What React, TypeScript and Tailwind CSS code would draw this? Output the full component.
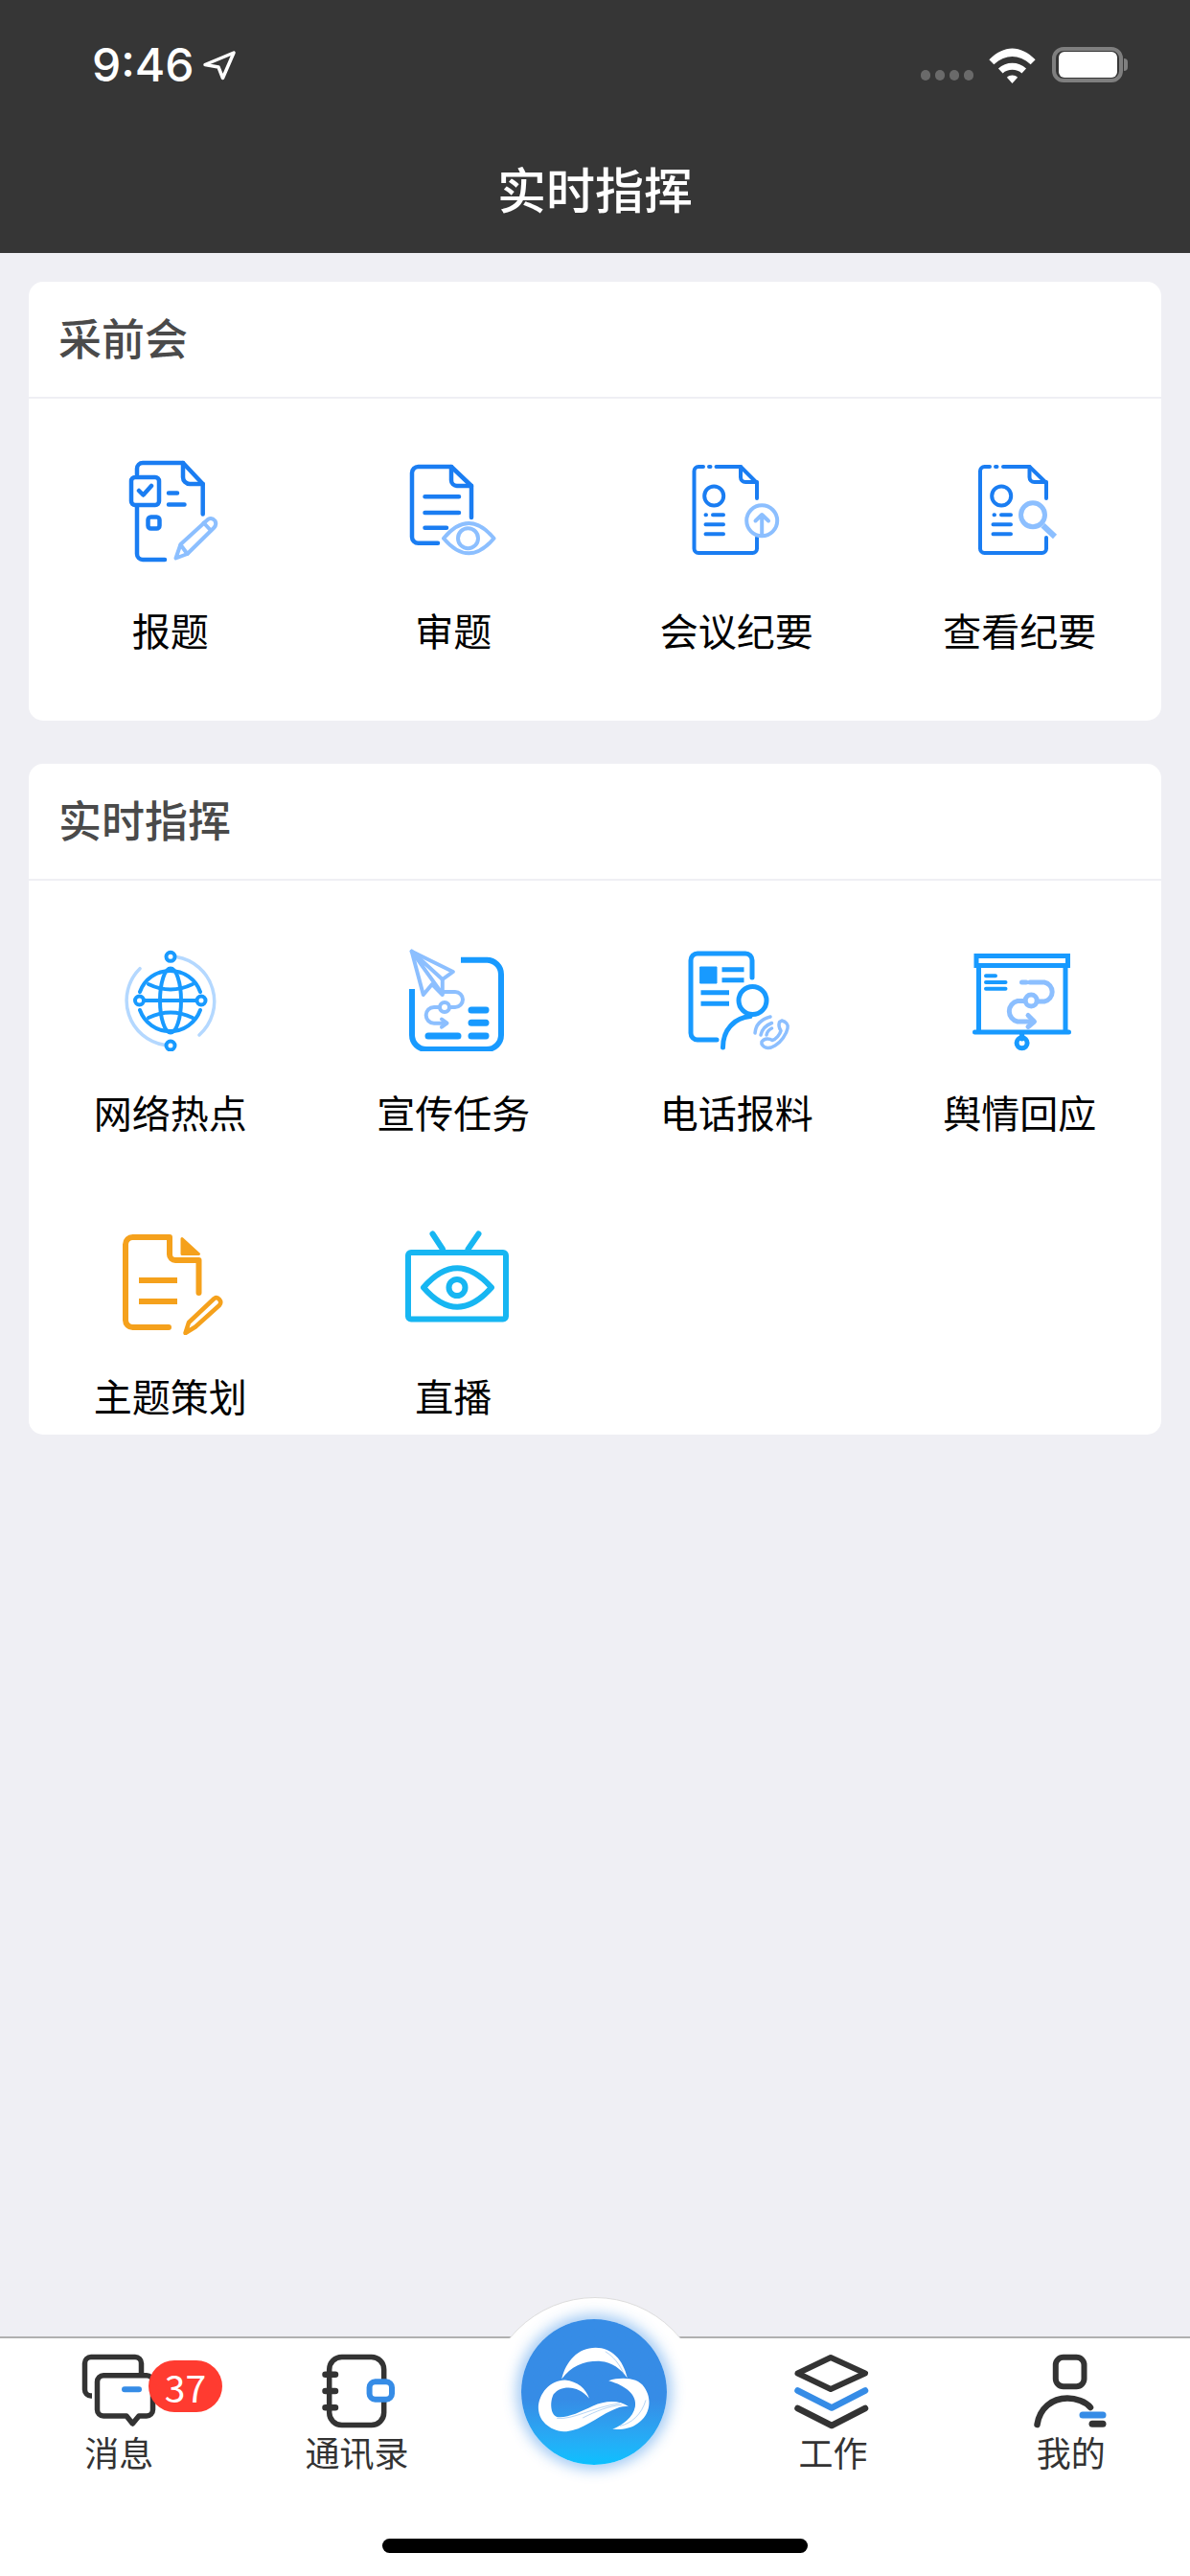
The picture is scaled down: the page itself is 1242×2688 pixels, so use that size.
import type { ReactNode } from "react";

const BLUE = "#1a7df2";
const SKY = "#189aff";
const LIGHT = "#8cbfff";
const DARK = "#333333";
const ACCENT = "#368ce6";

function Glyph({ children }: { children: ReactNode }) {
  return (
    <svg viewBox="0 0 120 120" className="h-[120px] w-[120px]" fill="none" strokeLinecap="round" strokeLinejoin="round">
      {children}
    </svg>
  );
}

function TabGlyph({ children }: { children: ReactNode }) {
  return (
    <svg viewBox="0 0 100 80" className="h-[80px] w-[100px]" fill="none" strokeLinecap="round" strokeLinejoin="round">
      {children}
    </svg>
  );
}

const reportIcon = (
  <Glyph>
    <g stroke={BLUE} strokeWidth="4.500">
      <path d="M25 21V15a6 6 0 0 1 6-6H73L93.700 31V62.500M25 55V104a6 6 0 0 0 6 6H54" />
      <path d="M73 9V24a7 7 0 0 0 7 7H93.700" />
      <rect x="19" y="24" width="29" height="29" rx="4" />
      <path d="M27 38l4.500 4.500L40 33" />
      <path d="M58 40.500H67M58 52.500H74.500" />
      <rect x="36.500" y="65.500" width="12" height="12" rx="3" />
    </g>
    <g stroke={LIGHT} strokeWidth="4">
      <path d="M65.500 108.500L70.500 94L99 68Q103 65.500 106.500 69.500Q108.500 73.500 105.500 76.500L77.500 104Z" />
      <path d="M94.500 71.500L102 79.500M70.500 94.500L77.500 104" />
    </g>
  </Glyph>
);

const reviewIcon = (
  <Glyph>
    <g stroke={BLUE} strokeWidth="4.500">
      <path d="M44 92.700H23.500a6.500 6.500 0 0 1-6.500-6.500V19.500a6.500 6.500 0 0 1 6.500-6.500H58L79 33V66" />
      <path d="M58 13V27a6 6 0 0 0 6 6H79" />
      <path d="M30.500 44.300H66M30.500 61H66M30.500 76.700H53" />
    </g>
    <g stroke={LIGHT} strokeWidth="4">
      <path d="M50 87.700Q76.400 56.500 102.500 87.700Q76.400 119 50 87.700Z" />
      <circle cx="75.500" cy="87.700" r="10.500" />
    </g>
  </Glyph>
);

const minutesIcon = (
  <Glyph>
    <g stroke={BLUE} strokeWidth="4">
      <path d="M25 13H20a4.500 4.500 0 0 0-4.500 4.500V98.500a4.500 4.500 0 0 0 4.500 4.500H76.500a4.500 4.500 0 0 0 4.500-4.500V87" />
      <path d="M31 13H32.500M38.500 13H64L81 30V46" />
      <path d="M64 13V24a5 5 0 0 0 5 5H81" />
      <circle cx="36.200" cy="43.500" r="10" />
      <path d="M27.500 63.300H28M35 63.300H46M27.500 73.300H46M27.500 83.300H46" />
    </g>
    <g stroke={LIGHT} strokeWidth="4">
      <circle cx="86.200" cy="69.300" r="16" />
      <path d="M86.200 85V63.500M79.500 69.500L86.200 63L93 69.500" />
    </g>
  </Glyph>
);

const viewMinutesIcon = (
  <Glyph>
    <g stroke={BLUE} strokeWidth="4">
      <path d="M29 13H23.500a4.500 4.500 0 0 0-4.500 4.500V98.500a4.500 4.500 0 0 0 4.500 4.500H83.500a4.500 4.500 0 0 0 4.500-4.500V87" />
      <path d="M35 13H36.500M43 13H70.500L88 30V46" />
      <path d="M70.500 13V24a5 5 0 0 0 5 5H88" />
      <circle cx="41.200" cy="43.500" r="10" />
      <path d="M33.500 63.300H34M41 63.300H51M32.500 73.300H51M32.500 83.300H51" />
    </g>
    <g stroke={LIGHT}>
      <circle cx="74" cy="63.300" r="12.500" strokeWidth="5" />
      <path d="M84.500 74.300L97 86" strokeWidth="6" strokeLinecap="butt" />
    </g>
  </Glyph>
);

const globeIcon = (
  <Glyph>
    <path d="M66 21.500A47 47 0 0 1 90 103M28 33.700A47 47 0 0 0 54 113.500" stroke="#b4d8ff" strokeWidth="3.500" />
    <g stroke={SKY} strokeWidth="4">
      <path d="M28 58A33.500 33.500 0 0 1 91 58M28 77A33.500 33.500 0 0 0 91 77" />
      <ellipse cx="60" cy="67" rx="11" ry="33.500" />
      <path d="M37 50Q60 61 83 50M37 85Q60 74 83 85M28 67H92" />
    </g>
    <g stroke={SKY} strokeWidth="4" fill="#ffffff">
      <circle cx="60" cy="21.300" r="4.500" />
      <circle cx="60" cy="114" r="4.500" />
      <circle cx="27.500" cy="67" r="4.500" />
      <circle cx="92" cy="67" r="4.500" />
    </g>
  </Glyph>
);

const campaignIcon = (
  <Glyph>
    <path d="M68 24.700H95a15 15 0 0 1 15 15V103a15 15 0 0 1-15 15H32a15 15 0 0 1-15-15V55" stroke={SKY} strokeWidth="6" strokeLinecap="butt" />
    <path d="M79 77H94M79 90.300H94M79 104H94M34 104H65" stroke={SKY} strokeWidth="7" />
    <g stroke={LIGHT} strokeWidth="4">
      <path d="M16.700 15.700L59.800 37L48.800 45V61L38 50L28.800 61Z" />
      <path d="M16.700 15.700L48.500 60M16.700 15.700L48.800 45" />
      <path d="M49.500 58H62a8 8 0 0 1 0 16H56M46 74H40a8.300 8.300 0 0 0 0 16.700H52" />
      <circle cx="51" cy="74" r="5" />
      <path d="M48 86.500L53.500 90.700L48 94.700" />
    </g>
  </Glyph>
);

const phoneIcon = (
  <Glyph>
    <g stroke={SKY} strokeWidth="5">
      <path d="M76 43V25a7 7 0 0 0-7-7H19a7 7 0 0 0-7 7V101a7 7 0 0 0 7 7H39" />
      <rect x="22" y="32" width="17" height="17" fill={SKY} strokeWidth="1" />
      <path d="M44.500 34.700H67.500M44.500 45.700H67.500M22.500 58.700H52M22.500 70.300H52" strokeLinecap="butt" strokeWidth="5" />
      <circle cx="76.500" cy="67" r="14.500" />
      <path d="M74 83.500C58 85 45.500 97 45.500 116" />
    </g>
    <g stroke={LIGHT} strokeWidth="3.500">
      <path d="M86 112.500c3 5.500 9 4.500 14 1.500c6-3.500 12-12 13-18c1-4-2-7-6-8l-2.500 1.500c-1 3-.5 6 1.500 9c-1 4-5 9-9 10c-3-2-8-2.500-11 1.500Z" />
      <path d="M79 101Q80 88 95 84M85 103Q87 94 96.500 90.500M91 103Q92 98 96.500 96" />
    </g>
  </Glyph>
);

const screenIcon = (
  <Glyph>
    <g stroke={SKY} strokeWidth="5">
      <rect x="15" y="20.500" width="95.500" height="10" strokeLinejoin="miter" />
      <path d="M17.500 31V100M108 31V100M13.500 100H111.500M62.600 100V107" />
      <circle cx="62.600" cy="111.300" r="5.500" />
      <path d="M25 41.300H35M25 48H45.500M25 54.700H45.500" strokeWidth="4" />
    </g>
    <g stroke={LIGHT} strokeWidth="5">
      <path d="M62.500 48H67M71 48H86a10.200 10.200 0 0 1 0 20H80M65 67.500H58a11 11 0 0 0 0 21.500H73" />
      <circle cx="72.200" cy="67" r="6" />
      <path d="M69 82.500L75.500 89L69 94.500" />
    </g>
  </Glyph>
);

const ORANGE = "#f5a11c";

const planIcon = (
  <Glyph>
    <g stroke={ORANGE} strokeWidth="6">
      <path d="M58 112H20.500a7.500 7.500 0 0 1-7.500-7.500V25.500a7.500 7.500 0 0 1 7.500-7.500H59V36a6 6 0 0 0 6 6H89.500V76" />
      <path d="M72 19.500L89.500 35.500H72Z" fill={ORANGE} strokeWidth="3" />
      <path d="M27 63H67M27 85H67" strokeLinecap="butt" />
    </g>
    <path d="M75.500 118L79 107L105.500 82Q108.500 80 111 83Q113.500 86 111 89L86 111.500Z" stroke={ORANGE} strokeWidth="4.500" />
  </Glyph>
);

const CYAN = "#17b6f2";

const liveIcon = (
  <Glyph>
    <g stroke={CYAN} strokeWidth="6">
      <rect x="13" y="34" width="102" height="69.500" rx="3" />
      <path d="M38.500 14.500L49 30.500M86.500 14.500L75.500 30.500" />
      <path d="M29 70.500Q64 30 100 70.500Q64 111 29 70.500Z" />
      <circle cx="64" cy="70.500" r="8.500" />
    </g>
  </Glyph>
);

const chatIcon = (
  <TabGlyph>
    <g stroke={DARK} strokeWidth="5.500">
      <path d="M22 45H21a6.500 6.500 0 0 1-6.500-6.500V11a6.500 6.500 0 0 1 6.500-6.500H67a6.500 6.500 0 0 1 6.500 6.500V22" strokeLinecap="butt" />
      <path d="M34 23.700H79a6.500 6.500 0 0 1 6.500 6.500V59.500a6.500 6.500 0 0 1-6.500 6.500H71L64.400 74L58 66H34a6.500 6.500 0 0 1-6.500-6.500V30.200a6.500 6.500 0 0 1 6.500-6.500Z" />
    </g>
    <path d="M56 38.300H71" stroke={ACCENT} strokeWidth="6" />
  </TabGlyph>
);

const contactsIcon = (
  <TabGlyph>
    <rect x="20.700" y="4.400" width="57" height="71.200" rx="13" stroke={DARK} strokeWidth="5.500" />
    <path d="M16.500 22.700H27M16.500 40H27M16.500 57.300H27" stroke={DARK} strokeWidth="6.500" />
    <rect x="62.600" y="30.300" width="23.400" height="18.400" rx="6" fill="#ffffff" stroke={ACCENT} strokeWidth="6" />
  </TabGlyph>
);

const layersIcon = (
  <TabGlyph>
    <path d="M48 5L84 21.500L48 38L13.500 21.500Z" stroke={DARK} strokeWidth="6" />
    <path d="M13.500 39.500L49 57.500L84 39.500" stroke={ACCENT} strokeWidth="6.500" />
    <path d="M13.500 58L49 76L84 58" stroke={DARK} strokeWidth="6.500" />
  </TabGlyph>
);

const personIcon = (
  <TabGlyph>
    <rect x="33.800" y="4.700" width="29.700" height="30.600" rx="8" stroke={DARK} strokeWidth="6" />
    <path d="M14.500 75C17 58 30 47.500 46 47.500C55 47.500 65 51 70 57" stroke={DARK} strokeWidth="6.500" />
    <path d="M62 65H83" stroke={ACCENT} strokeWidth="7" />
    <path d="M72 74.300H83" stroke={DARK} strokeWidth="7" />
  </TabGlyph>
);

const preMeeting = [
  { label: "报题", icon: reportIcon },
  { label: "审题", icon: reviewIcon },
  { label: "会议纪要", icon: minutesIcon },
  { label: "查看纪要", icon: viewMinutesIcon },
];

const command = [
  { label: "网络热点", icon: globeIcon },
  { label: "宣传任务", icon: campaignIcon },
  { label: "电话报料", icon: phoneIcon },
  { label: "舆情回应", icon: screenIcon },
  { label: "主题策划", icon: planIcon },
  { label: "直播", icon: liveIcon },
];

function Section({ title, items, bottom }: { title: string; items: { label: string; icon: ReactNode }[]; bottom: string }) {
  return (
    <section className={`rounded-[15px] bg-white ${bottom}`}>
      <h2 className="flex h-[122px] items-center border-b-2 border-[#efeff4] pb-[5px] pl-[31px] text-[45px] font-medium text-[#4a4a4a]">
        {title}
      </h2>
      <div className="grid grid-cols-4 gap-y-[88px] pt-[58px]">
        {items.map((item) => (
          <div key={item.label} className="flex flex-col items-center">
            {item.icon}
            <span className="mt-[38px] text-[40px] leading-[50px] text-black">{item.label}</span>
          </div>
        ))}
      </div>
    </section>
  );
}

function Tab({ label, icon, badge }: { label: string; icon: ReactNode; badge?: string }) {
  return (
    <div className="relative flex flex-col items-center">
      {icon}
      <span className="mt-[3px] text-[36px] leading-[40px] text-[#333333]">{label}</span>
      {badge && (
        <span className="absolute left-[155px] top-[8px] flex h-[54px] w-[77px] items-center justify-center rounded-full bg-[#ff3b30] text-[39px] text-white">
          {badge}
        </span>
      )}
    </div>
  );
}

export default function App() {
  return (
    <div className="flex h-[2688px] w-[1242px] flex-col overflow-hidden bg-[#efeff4] font-['Noto_Sans_CJK_SC','Liberation_Sans',sans-serif]">
      <header className="h-[264px] bg-[#363636] pt-[49px]">
        <div className="flex h-[37px] items-center pl-[96px] pr-[65px]">
          <span className="font-['Inter',sans-serif] text-[48px] font-medium leading-[37px] text-white">9:46</span>
          <svg viewBox="0 0 36 32" className="ml-[8px] h-[32px] w-[36px]" fill="none">
            <path d="M3 15.500L33 3L21.500 29.500L17 18Z" stroke="#ffffff" strokeWidth="3.500" strokeLinejoin="round" />
          </svg>
          <div className="ml-auto mt-[22px] flex gap-[5px]">
            {[0, 1, 2, 3].map((i) => (
              <span key={i} className="h-[11px] w-[10px] rounded-full bg-[#6a6a6a]" />
            ))}
          </div>
          <svg viewBox="247 20 146 115" className="ml-[16px] h-[38px] w-[49px]" fill="#ffffff">
            <path d="M247 60C295 13 345 13 393 60L378 75C340 42 300 42 262 75Z" />
            <path d="M276 88C300 65 340 65 364 88L350 103C335 88 305 88 290 103Z" />
            <path d="M303 116C312 107 328 107 337 116L320 135Z" />
          </svg>
          <div className="ml-[17px] flex h-[37px] w-[74px] items-center justify-center rounded-[12px] border-[4px] border-[#7f7f7f]">
            <div className="h-[27px] w-[61px] rounded-[6px] bg-white" />
          </div>
          <div className="ml-[1px] h-[13px] w-[4px] rounded-r-full bg-[#7f7f7f]" />
        </div>
        <h1 className="mt-[78px] text-center text-[51px] font-medium leading-[64px] text-white">实时指挥</h1>
      </header>

      <main className="flex flex-1 flex-col gap-[45px] px-[30px] pt-[30px]">
        <Section title="采前会" items={preMeeting} bottom="pb-[70px]" />
        <Section title="实时指挥" items={command} bottom="pb-[16px]" />
      </main>

      <footer className="relative h-[250px] border-t-2 border-[#b0b0b0] bg-white pt-[15px]">
        <div className="absolute -top-[43px] left-[506px] h-[43px] w-[230px] overflow-hidden">
          <div className="h-[230px] w-[230px] rounded-full border border-[#dddddd] bg-white" />
        </div>
        <div className="absolute -top-[20px] left-[544px] z-10 h-[152px] w-[152px] rounded-full bg-linear-to-b from-[#368ce6] from-55% to-[#08c0ff] shadow-[0_0_14px_5px_rgba(54,140,230,0.45)]">
          <svg viewBox="40 90 450 450" className="h-[152px] w-[152px]">
            <g fill="#ffffff">
              <path d="M165 275C178 220 215 178 270 178C320 178 355 215 368 272C350 245 320 222 285 220C235 218 195 235 165 275Z" />
              <path d="M250 335C240 305 215 282 175 278C130 278 93 320 93 365C95 410 135 437 180 437C230 432 270 395 320 372C340 362 355 358 372 360C345 340 300 340 262 358C220 378 180 397 150 392C130 385 128 345 140 322C160 295 215 290 250 335Z" />
              <path d="M310 280C350 268 400 270 420 300C445 335 440 385 400 412C380 428 350 432 322 430C355 415 385 395 392 360C398 325 365 295 310 280Z" />
            </g>
            <g fill="none" stroke="#6aa9ea" strokeWidth="1.500">
              <path d="M150 396C200 402 260 362 345 350M230 395C270 375 310 358 350 355" />
              <path d="M300 190C325 205 345 230 358 262M345 420C380 412 412 385 425 340" />
            </g>
          </svg>
        </div>
        <div className="grid grid-cols-5">
          <Tab label="消息" icon={chatIcon} badge="37" />
          <Tab label="通讯录" icon={contactsIcon} />
          <div />
          <Tab label="工作" icon={layersIcon} />
          <Tab label="我的" icon={personIcon} />
        </div>
        <div className="mx-auto mt-[71px] h-[15px] w-[444px] rounded-full bg-black" />
      </footer>
    </div>
  );
}
